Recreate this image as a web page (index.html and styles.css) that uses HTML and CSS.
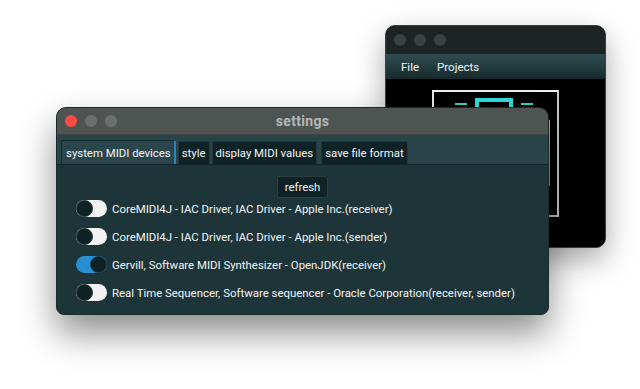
FILE: index.html
```html
<!DOCTYPE html>
<html>
<head>
<meta charset="utf-8">
<link rel="stylesheet" href="styles.css">
</head>
<body>
<div class="desk">
  <div class="win back">
    <div class="titlebar back-title">
      <span class="light dim"></span><span class="light dim"></span><span class="light dim"></span>
    </div>
    <div class="menubar">
      <span class="menu">File</span>
      <span class="menu">Projects</span>
    </div>
    <div class="canvas">
      <div class="frame"></div>
      <div class="cy-box"></div>
      <div class="cy-dash d1"></div>
      <div class="cy-dash d2"></div>
      <div class="cy-bar"></div>
    </div>
  </div>

  <div class="win front">
    <div class="titlebar front-title">
      <div class="lights">
        <span class="light red"></span><span class="light gray"></span><span class="light gray"></span>
      </div>
      <div class="title">settings</div>
    </div>
    <div class="tabbar">
      <div class="tab active">system MIDI devices</div>
      <div class="tab">style</div>
      <div class="tab">display MIDI values</div>
      <div class="tab wide">save file format</div>
    </div>
    <div class="content">
      <div class="btnrow"><div class="btn">refresh</div></div>
      <div class="rows">
        <div class="row"><span class="toggle"><span class="knob"></span></span><span class="label">CoreMIDI4J - IAC Driver, IAC Driver - Apple Inc.(receiver)</span></div>
        <div class="row"><span class="toggle"><span class="knob"></span></span><span class="label">CoreMIDI4J - IAC Driver, IAC Driver - Apple Inc.(sender)</span></div>
        <div class="row"><span class="toggle on"><span class="knob"></span></span><span class="label">Gervill, Software MIDI Synthesizer - OpenJDK(receiver)</span></div>
        <div class="row"><span class="toggle"><span class="knob"></span></span><span class="label">Real Time Sequencer, Software sequencer - Oracle Corporation(receiver, sender)</span></div>
      </div>
    </div>
  </div>
</div>
</body>
</html>
```

FILE: styles.css
```css
html, body {
  margin: 0;
  padding: 0;
  background: #ffffff;
}
body {
  font-family: Roboto, "Liberation Sans", sans-serif;
  width: 640px;
  height: 389px;
  overflow: hidden;
}
.desk {
  position: relative;
  width: 640px;
  height: 389px;
}
.win {
  position: absolute;
  display: flex;
  flex-direction: column;
  overflow: hidden;
  box-sizing: border-box;
}
.back {
  left: 385px;
  top: 25px;
  width: 221px;
  height: 223px;
  border-radius: 10px;
  background: #000;
  border: 1px solid #3a3f3f;
  box-shadow: 0 12px 30px rgba(0,0,0,0.35);
}
.titlebar {
  display: flex;
  align-items: center;
  flex-shrink: 0;
}
.back-title {
  height: 28px;
  background: #1c2524;
  padding-left: 8px;
  gap: 8px;
}
.light {
  display: block;
  width: 12px;
  height: 12px;
  border-radius: 50%;
}
.light.dim { background: #3a4240; }
.menubar {
  height: 25px;
  flex-shrink: 0;
  background: linear-gradient(#2f4d51, #162a2d);
  display: flex;
  align-items: center;
  padding-left: 15px;
  gap: 18px;
  font-size: 11.5px;
  color: #f2f2f2;
}
.canvas {
  position: relative;
  flex: 1;
  background: #000;
}
.frame {
  position: absolute;
  left: 46px;
  top: 11px;
  width: 123px;
  height: 123px;
  border: 2px solid;
  border-color: #f0f0f0 #c8c8c8 #b8b8b8 #e8e8e8;
}
.cy-box {
  position: absolute;
  left: 89px;
  top: 19px;
  width: 30px;
  height: 20px;
  border: 4px solid #2fe0da;
}
.cy-dash {
  position: absolute;
  top: 24px;
  width: 12px;
  height: 2px;
  background: #2fd6d2;
}
.d1 { left: 69px; }
.d2 { left: 135px; }
.cy-bar {
  position: absolute;
  left: 158px;
  top: 41px;
  width: 6px;
  height: 66px;
  background: linear-gradient(#2fe0da, #1fb6b4);
}

.front {
  left: 56px;
  top: 107px;
  width: 493px;
  height: 208px;
  border-radius: 10px 10px 8px 8px;
  background: #1d3439;
  border: 1px solid #1a2a2c;
  box-shadow: 0 18px 36px rgba(0,0,0,0.45);
}
.front-title {
  position: relative;
  height: 26px;
  background: #4e5452;
  border-bottom: 1px solid #3c4342;
  justify-content: center;
}
.lights {
  position: absolute;
  left: 8px;
  top: 7px;
  display: flex;
  gap: 8px;
}
.light.red { background: #fe4a45; }
.light.gray { background: #6b706f; }
.title {
  font-weight: bold;
  font-size: 14px;
  color: #b3b8b7;
  letter-spacing: 0.3px;
}
.tabbar {
  height: 29px;
  flex-shrink: 0;
  background: #294448;
  border-bottom: 1px solid #11262a;
  display: flex;
  align-items: flex-end;
  padding-left: 4px;
  gap: 2px;
}
.tab {
  height: 23px;
  box-sizing: border-box;
  display: flex;
  align-items: center;
  padding: 0 3px;
  font-size: 11.4px;
  color: #f4f4f4;
  background: #0f2226;
  border: 1px solid #22383b;
  border-bottom: none;
  border-radius: 2px 2px 0 0;
}
.tab.active {
  height: 24px;
  background: #2a464a;
  border-color: #17292c;
  border-right: 2px solid #1e88c8;
  padding: 0 3px 0 4px;
}
.tab.wide { margin-left: 2px; }
.content {
  flex: 1;
  display: flex;
  flex-direction: column;
  padding-top: 11px;
}
.btnrow {
  display: flex;
  justify-content: center;
}
.btn {
  height: 22px;
  box-sizing: border-box;
  padding: 0 7px;
  display: flex;
  align-items: center;
  font-size: 11.4px;
  color: #f4f4f4;
  background: #0f2226;
  border: 1px solid #2a3d40;
  border-radius: 2px;
}
.rows {
  display: flex;
  flex-direction: column;
  padding-left: 19px;
  padding-top: 2px;
  gap: 11px;
}
.row {
  height: 17px;
  display: flex;
  align-items: center;
  gap: 5px;
}
.toggle {
  position: relative;
  width: 31px;
  height: 17px;
  border-radius: 9px;
  background: #f2f2f2;
  flex-shrink: 0;
}
.toggle .knob {
  position: absolute;
  left: 0;
  top: 0;
  width: 17px;
  height: 17px;
  box-sizing: border-box;
  border-radius: 50%;
  background: #0e2226;
  border: 1px solid #24383b;
}
.toggle.on {
  background: #2a8fd0;
}
.toggle.on .knob {
  left: 14px;
}
.label {
  font-size: 11.4px;
  color: #f4f4f4;
  white-space: nowrap;
}
```
